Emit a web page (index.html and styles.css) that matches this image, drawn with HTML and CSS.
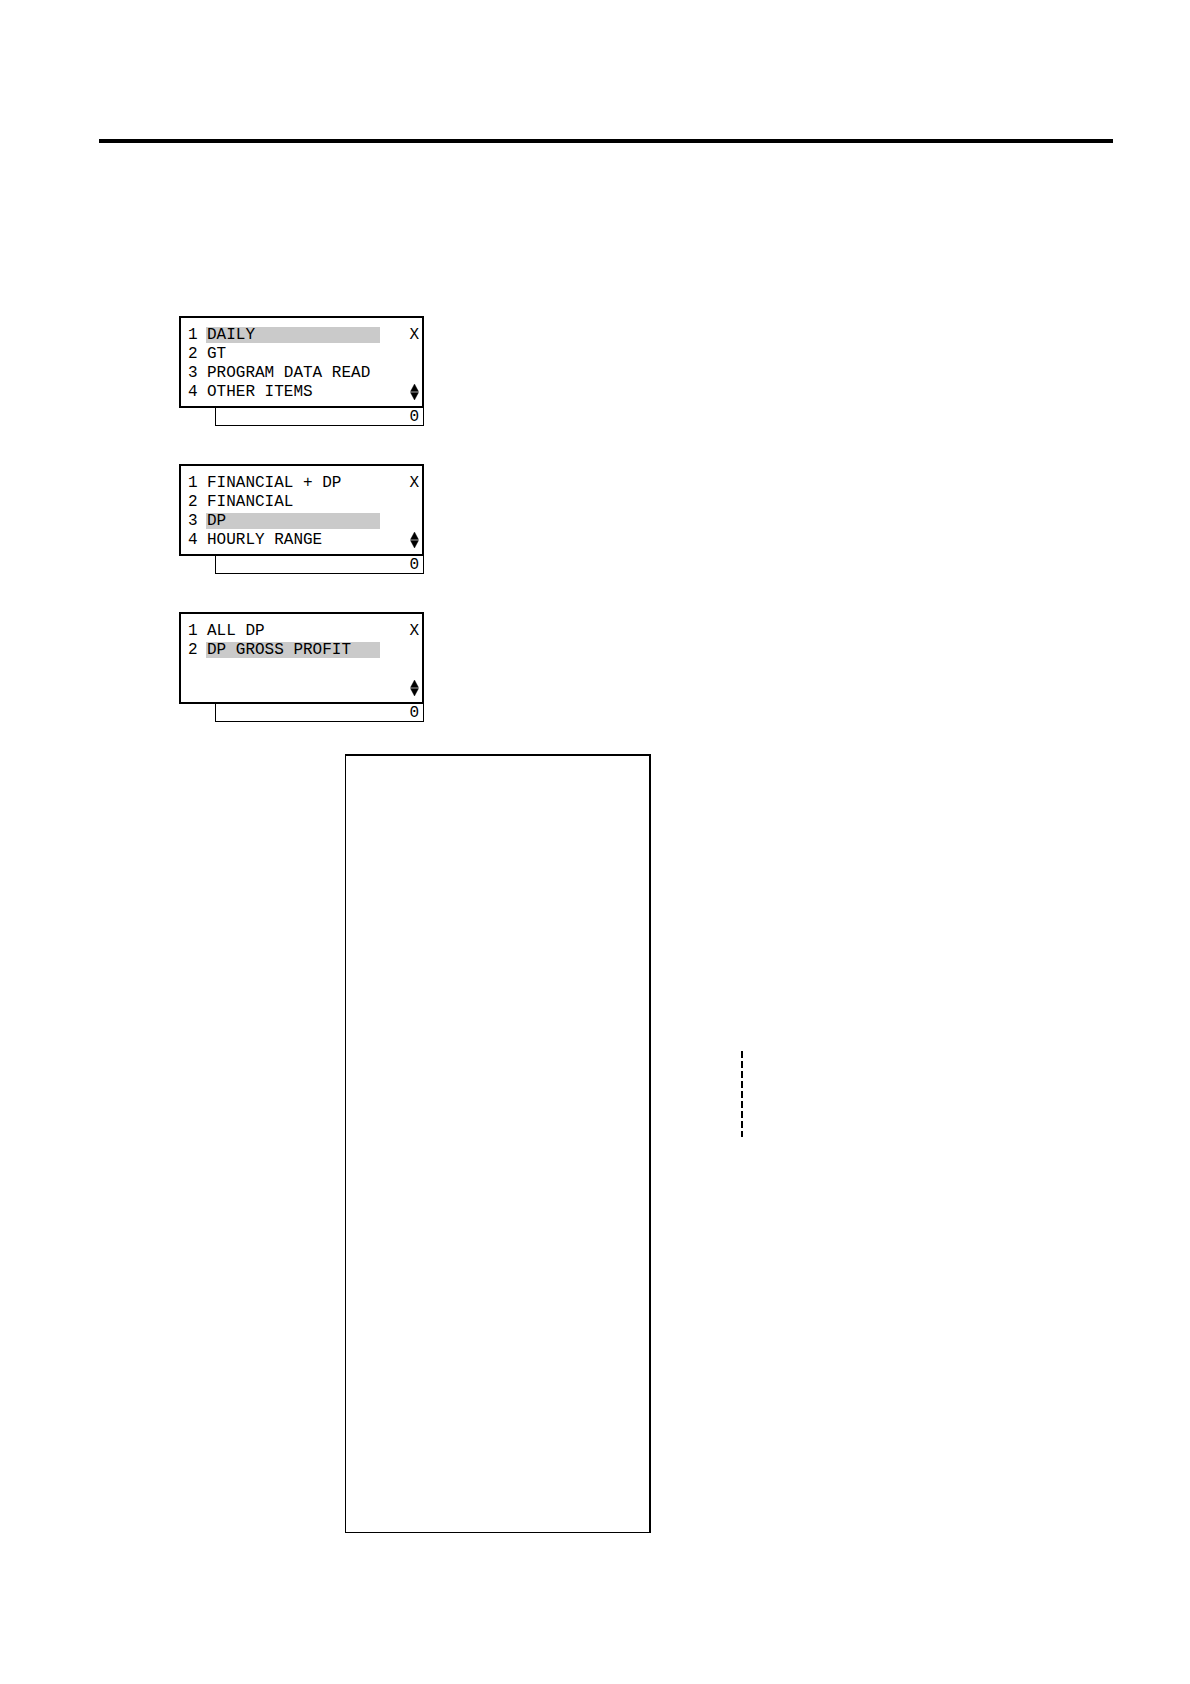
FILE: index.html
```html
<!DOCTYPE html>
<html lang="en">
<head>
<meta charset="utf-8">
<meta name="viewport" content="width=device-width, initial-scale=1">
<title>DP gross profit</title>
<link rel="stylesheet" href="styles.css">
</head>
<body>
<main class="page">
  <hr class="rule">

  <div class="screens">
    <section class="screen">
      <div class="display">
        <ul class="menu">
          <li class="item"><span class="num">1</span><span class="label selected">DAILY</span></li>
          <li class="item"><span class="num">2</span><span class="label">GT</span></li>
          <li class="item"><span class="num">3</span><span class="label">PROGRAM DATA READ</span></li>
          <li class="item"><span class="num">4</span><span class="label">OTHER ITEMS</span></li>
        </ul>
        <div class="status">
          <span>X</span>
          <svg class="arrows" viewBox="0 0 8 16" aria-hidden="true"><path d="M4 0L8 7.4H0ZM0 8.6H8L4 16Z"/></svg>
        </div>
      </div>
      <div class="entry">0</div>
    </section>

    <section class="screen">
      <div class="display">
        <ul class="menu">
          <li class="item"><span class="num">1</span><span class="label">FINANCIAL + DP</span></li>
          <li class="item"><span class="num">2</span><span class="label">FINANCIAL</span></li>
          <li class="item"><span class="num">3</span><span class="label selected">DP</span></li>
          <li class="item"><span class="num">4</span><span class="label">HOURLY RANGE</span></li>
        </ul>
        <div class="status">
          <span>X</span>
          <svg class="arrows" viewBox="0 0 8 16" aria-hidden="true"><path d="M4 0L8 7.4H0ZM0 8.6H8L4 16Z"/></svg>
        </div>
      </div>
      <div class="entry">0</div>
    </section>

    <section class="screen">
      <div class="display">
        <ul class="menu">
          <li class="item"><span class="num">1</span><span class="label">ALL DP</span></li>
          <li class="item"><span class="num">2</span><span class="label selected">DP GROSS PROFIT</span></li>
        </ul>
        <div class="status">
          <span>X</span>
          <svg class="arrows" viewBox="0 0 8 16" aria-hidden="true"><path d="M4 0L8 7.4H0ZM0 8.6H8L4 16Z"/></svg>
        </div>
      </div>
      <div class="entry">0</div>
    </section>
  </div>

  <div class="report">
    <div class="receipt"></div>
    <div class="dashes"></div>
  </div>
</main>
</body>
</html>
```

FILE: styles.css
```css
* {
  box-sizing: border-box;
}

body {
  margin: 0;
  background: #fff;
  color: #000;
  font: 16px/16px "Liberation Mono", "Courier New", monospace;
}

.page {
  padding: 139px 77px 151px 99px;
}

.rule {
  height: 4px;
  margin: 0;
  border: 0;
  background: #000;
}

.screens {
  display: flex;
  flex-direction: column;
  gap: 38px;
  margin: 173px 0 0 80px;
}

.screen {
  width: 245px;
}

/* Four-line menu with the mode and scroll marks at the right edge */
.display {
  display: flex;
  justify-content: space-between;
  min-height: 92px;
  padding: 7px 3px 5px 7px;
  border: 2px solid #000;
}

.menu {
  margin: 0;
  padding: 0;
  list-style: none;
}

.item {
  display: flex;
  align-items: center;
  height: 19px;
}

.num {
  width: 18px;
}

.label {
  width: 174px;
  padding-left: 1px;
  white-space: nowrap;
}

.selected {
  background: #cacaca;
}

.status {
  display: flex;
  flex-direction: column;
  align-items: center;
  justify-content: space-between;
  padding: 2px 0 1px;
}

.arrows {
  width: 9px;
  height: 16px;
}

.arrows path {
  stroke: #000;
  stroke-width: 0.4;
}

/* Numeric entry line that hangs below the menu */
.entry {
  height: 18px;
  margin-left: 36px;
  padding: 1px 4px 0 0;
  border: solid #000;
  border-width: 0 1px 1px;
  text-align: right;
}

.report {
  display: flex;
  align-items: flex-start;
  gap: 90px;
  margin: 32px 0 0 246px;
}

.receipt {
  width: 306px;
  min-height: 779px;
  border: solid #000;
  border-width: 2px 2px 1px 1px;
}

.dashes {
  width: 2px;
  height: 86px;
  margin-top: 297px;
  background: repeating-linear-gradient(#000 0 7px, transparent 7px 10px);
}
```
